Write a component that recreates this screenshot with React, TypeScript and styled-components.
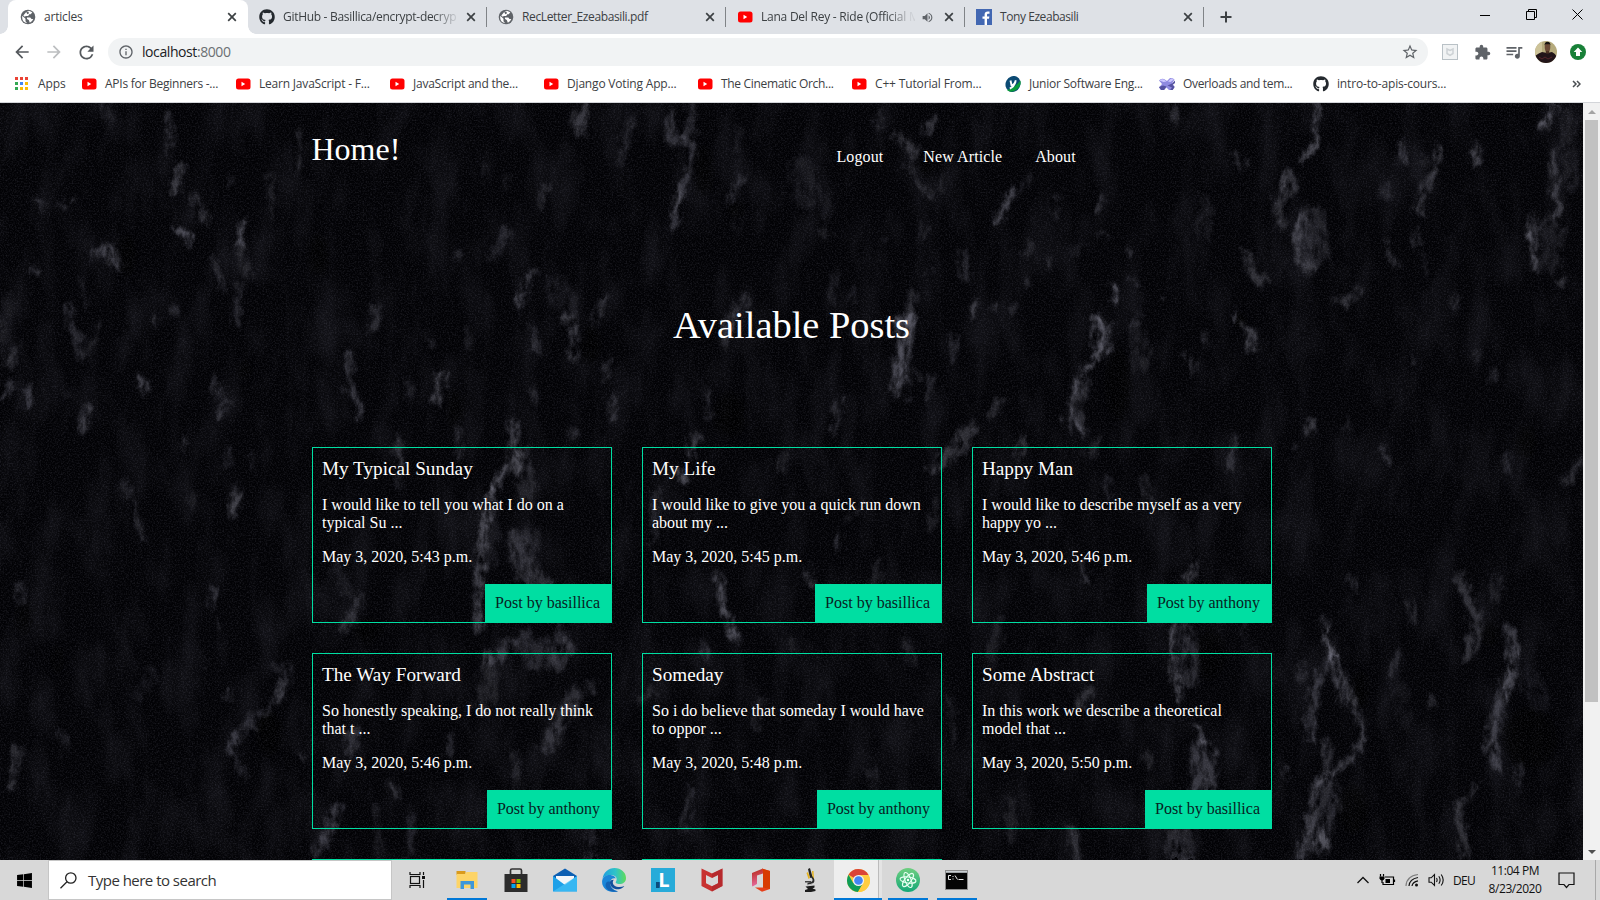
import React from "react";
import styled, { createGlobalStyle } from "styled-components";
import { FaGithub, FaWindows } from "react-icons/fa";
import {
  MdArrowBack,
  MdArrowForward,
  MdRefresh,
  MdInfoOutline,
  MdStarBorder,
  MdExtension,
  MdQueueMusic,
  MdVolumeUp,
} from "react-icons/md";

const UI_FONT = '"Open Sans", "Noto Sans", sans-serif';
const PAGE_FONT = '"Liberation Serif", "Times New Roman", serif';
const ACCENT = "#00dea2";

const GlobalStyle = createGlobalStyle`
  html, body { margin: 0; padding: 0; }
  body { overflow: hidden; background: #000; }
  * { box-sizing: border-box; }
`;

const Screen = styled.div`
  width: 1600px;
  height: 900px;
  display: flex;
  flex-direction: column;
  font-family: ${UI_FONT};
  overflow: hidden;
`;

/* ---------- browser chrome ---------- */

const TabStrip = styled.div`
  height: 34px;
  flex: none;
  display: flex;
  background: #dee1e6;
  padding-left: 8px;
`;

const TabBox = styled.div<{ $active?: boolean }>`
  position: relative;
  width: ${(p) => (p.$active ? 240 : 239)}px;
  height: 34px;
  padding: 0 8px 0 ${(p) => (p.$active ? 12 : 11)}px;
  display: flex;
  align-items: center;
  border-radius: 8px 8px 0 0;
  background: ${(p) => (p.$active ? "#fff" : "transparent")};

  &::before,
  &::after {
    content: "";
    position: absolute;
    display: ${(p) => (p.$active ? "block" : "none")};
    bottom: 0;
    width: 8px;
    height: 8px;
  }
  &::before {
    left: -8px;
    background: radial-gradient(circle at 0 0, transparent 7.5px, #fff 8px);
  }
  &::after {
    right: -8px;
    background: radial-gradient(circle at 100% 0, transparent 7.5px, #fff 8px);
  }
`;

const TabDivider = styled.span`
  position: absolute;
  right: 0;
  top: 7px;
  width: 1px;
  height: 20px;
  background: #808387;
`;

const IconSlot = styled.span<{ $size?: number }>`
  width: ${(p) => p.$size ?? 16}px;
  height: ${(p) => p.$size ?? 16}px;
  flex: none;
  display: flex;
  align-items: center;
  justify-content: center;
`;

const TabTitle = styled.span<{ $track?: number; $fade?: boolean }>`
  flex: 1;
  margin: 0 ${(p) => (p.$fade ? 2 : 8)}px 1px 8px;
  min-width: 0;
  white-space: nowrap;
  font-size: 12px;
  line-height: 18px;
  letter-spacing: ${(p) => p.$track ?? 0}px;
  color: #3c4043;
  ${(p) =>
    p.$fade
      ? "-webkit-mask-image: linear-gradient(90deg, #000 calc(100% - 28px), rgba(0, 0, 0, 0.1) calc(100% - 4px));"
      : ""}
`;

const AudioSlot = styled.span`
  width: 24px;
  flex: none;
  display: flex;
  padding-left: 4px;
`;

const NewTab = styled.div`
  width: 44px;
  display: flex;
  align-items: center;
  justify-content: center;
`;

const WindowButtons = styled.div`
  margin-left: auto;
  display: flex;
  height: 29px;
`;

const WindowButton = styled.div`
  width: 46px;
  display: flex;
  align-items: center;
  justify-content: center;
`;

const Toolbar = styled.div`
  height: 36px;
  flex: none;
  background: #fff;
  display: flex;
  align-items: center;
  padding-left: 6px;
`;

const NavButton = styled.span<{ $dim?: boolean }>`
  width: 32px;
  display: flex;
  justify-content: center;
  color: ${(p) => (p.$dim ? "#bcbec0" : "#55595d")};
`;

const AddressBar = styled.div`
  width: 1320px;
  height: 28px;
  margin-left: 6px;
  border-radius: 14px;
  background: #f1f3f4;
  display: flex;
  align-items: center;
  padding: 0 9px 0 10px;
  color: #5f6368;
`;

const Address = styled.span`
  flex: 1;
  margin: 0 8px;
  font-size: 14px;
  line-height: 20px;
  letter-spacing: -0.42px;
  color: #6b6f73;
  b {
    font-weight: 400;
    color: #202124;
  }
`;

const Extensions = styled.div`
  margin-left: 6px;
  display: flex;
`;

const ExtensionSlot = styled.span`
  width: 32px;
  height: 24px;
  display: flex;
  align-items: center;
  justify-content: center;
  color: #5f6368;
`;

const Bookmarks = styled.div`
  height: 33px;
  flex: none;
  background: #fff;
  border-bottom: 1px solid #d3d5d9;
  display: flex;
  align-items: center;
  padding: 0 19px 4px 14px;
`;

const Bookmark = styled.div<{ $width: number }>`
  width: ${(p) => p.$width}px;
  flex: none;
  display: flex;
  align-items: center;
`;

const BookmarkLabel = styled.span<{ $track: number }>`
  margin-left: 8px;
  font-size: 12px;
  line-height: 18px;
  white-space: nowrap;
  letter-spacing: ${(p) => p.$track}px;
  color: #3c4043;
`;

const MoreBookmarks = styled.span`
  margin-left: auto;
  display: flex;
`;

/* ---------- web page ---------- */

const Viewport = styled.div`
  height: 757px;
  flex: none;
  display: flex;
`;

const Page = styled.div`
  position: relative;
  width: 1583px;
  height: 757px;
  overflow: hidden;
  background: #040407;
  color: #fff;
  font-family: ${PAGE_FONT};
`;

const Backdrop = styled.svg`
  position: absolute;
  inset: 0;
  width: 1583px;
  height: 757px;
`;

const Content = styled.main`
  position: relative;
  width: 960px;
  margin: 0 auto;
`;

const Header = styled.header`
  height: 104px;
  display: flex;
  padding-top: 28px;
`;

const Brand = styled.div`
  width: 525px;
  font-size: 32px;
  line-height: 37px;
`;

const Menu = styled.nav`
  display: flex;
  padding-top: 17px;
  font-size: 16px;
  line-height: 18px;
`;

const MenuItem = styled.span<{ $gap: number }>`
  margin-right: ${(p) => p.$gap}px;
  letter-spacing: 0.1px;
`;

const Heading = styled.h1`
  margin: 96px 0 0;
  height: 144px;
  font-weight: 400;
  font-size: 38.4px;
  line-height: 44px;
  text-align: center;
`;

const Grid = styled.section`
  display: grid;
  grid-template-columns: repeat(3, 300px);
  gap: 30px;
`;

const Card = styled.article`
  height: 176px;
  border: 1px solid ${ACCENT};
  padding: 10px 0 0 9.5px;
  display: flex;
  flex-direction: column;
`;

const CardTitle = styled.h2`
  margin: 0;
  font-size: 19.2px;
  font-weight: 400;
  line-height: 22px;
`;

const CardText = styled.p`
  margin: 16px 10px 0 0;
  font-size: 16px;
  line-height: 18px;
`;

const Author = styled.span`
  align-self: flex-end;
  margin: 18px -1px -1px 0;
  height: 39px;
  padding: 0 11.5px 0 10px;
  background: ${ACCENT};
  color: #07221f;
  font-size: 16px;
  line-height: 38px;
`;

const ScrollTrack = styled.div`
  width: 17px;
  background: #f1f1f1;
  display: flex;
  flex-direction: column;
  align-items: center;
`;

const ScrollArrow = styled.span`
  height: 17px;
  display: flex;
  align-items: center;
`;

const ScrollThumb = styled.span`
  width: 13px;
  height: 582px;
  margin-bottom: auto;
  background: #c1c1c1;
`;

/* ---------- taskbar ---------- */

const Taskbar = styled.div`
  height: 40px;
  flex: none;
  background: #d8d8d8;
  display: flex;
  color: #111;
`;

const StartButton = styled.div`
  width: 48px;
  display: flex;
  align-items: center;
  justify-content: center;
  color: #000;
`;

const SearchBox = styled.div`
  width: 344px;
  height: 40px;
  border: 1px solid #c6c6c6;
  background: #fff;
  display: flex;
  align-items: center;
  padding-left: 11px;
`;

const SearchText = styled.span`
  margin: 0 0 1px 11px;
  font-size: 15px;
  letter-spacing: -0.52px;
  color: #333;
`;

const TaskItem = styled.div<{ $width?: number; $open?: boolean; $active?: boolean }>`
  position: relative;
  width: ${(p) => p.$width ?? 49}px;
  display: flex;
  align-items: center;
  justify-content: center;
  background: ${(p) =>
    p.$active
      ? "linear-gradient(90deg, #eee 44px, #bcbcbc 44px, #bcbcbc 45px, #e4e4e4 45px, #e4e4e4 48px, transparent 48px)"
      : "transparent"};
  &::after {
    content: "";
    position: absolute;
    display: ${(p) => (p.$open ? "block" : "none")};
    left: ${(p) => (p.$active ? 0 : 5)}px;
    width: ${(p) => (p.$active ? 48 : 40)}px;
    bottom: 0;
    height: 2px;
    background: #0078d7;
  }
`;

const Tray = styled.div`
  margin-left: auto;
  display: flex;
  align-items: center;
`;

const TraySlot = styled.span<{ $width: number }>`
  width: ${(p) => p.$width}px;
  display: flex;
  justify-content: center;
`;

const Language = styled.span`
  width: 26px;
  margin-left: 6px;
  font-size: 12px;
  letter-spacing: -0.7px;
`;

const Clock = styled.div`
  width: 72px;
  font-size: 12px;
  line-height: 18px;
  letter-spacing: -0.45px;
  text-align: center;
`;

const ShowDesktop = styled.span`
  width: 5px;
  height: 40px;
  margin-left: 14px;
  border-left: 1px solid #a8a8a8;
`;

/* ---------- icons ---------- */

const YouTubeIcon = () => (
  <svg width="16" height="16" viewBox="0 0 16 16">
    <rect x="1" y="2.500" width="14.500" height="11" rx="2.500" fill="#f00" />
    <path d="M6.500 5.800v4.400L10.200 8z" fill="#fff" />
  </svg>
);

const GlobeIcon = () => (
  <svg width="16" height="16" viewBox="0 0 16 16">
    <circle cx="8" cy="8" r="7.300" fill="#5f6368" />
    <path
      d="M2.200 6.800l3.300 3v2.400l1.700 2Q2.500 13.500 2.200 9zM6 3.200l3-1.400 3.300 1.500-1.500 1.900H9.300L8.200 7H5.800l-1 .8-1.500-1.300zM7 8.500h3.300l1.200 1.600h1.800Q12.200 13 9.800 13.700L8.800 11 7 10z"
      fill="#fff"
    />
    <path d="M6.200 3.300l2.200-.6.600 1.500-1.500 1z" fill="#5f6368" />
  </svg>
);

const GithubIcon = () => <FaGithub size={16} color="#24292e" />;

const FacebookIcon = () => (
  <svg width="16" height="16" viewBox="0 0 16 16">
    <rect width="16" height="16" fill="#4267b2" />
    <path
      d="M11 16V9.800h2l.35-2.400H11V5.900c0-.8.3-1.200 1.200-1.200h1.300V2.500c-.4-.05-1-.1-1.700-.1-2 0-3.200 1.200-3.200 3.200v1.800H6.500v2.400h2.100V16z"
      fill="#fff"
    />
  </svg>
);

const CloseIcon = () => (
  <svg width="16" height="16" viewBox="0 0 16 16">
    <path d="M4.200 4.200l7.600 7.600M11.800 4.200l-7.600 7.600" stroke="#3c4043" strokeWidth="1.700" />
  </svg>
);

const AppsIcon = () => (
  <svg width="16" height="16" viewBox="0 0 16 16">
    {["#ea4335", "#ea4335", "#ea4335", "#34a853", "#4285f4", "#fbbc05", "#34a853", "#fbbc05", "#fbbc05"].map(
      (c, i) => (
        <rect key={i} x={1 + (i % 3) * 5} y={1 + Math.floor(i / 3) * 5} width="3" height="3" fill={c} />
      )
    )}
  </svg>
);

const YIcon = () => (
  <svg width="16" height="16" viewBox="0 0 16 16">
    <ellipse cx="8" cy="8" rx="7.300" ry="8.200" transform="rotate(28 8 8)" fill="#0b4a73" />
    <path d="M15.300 4.500Q17 9 11.500 13.800 6 17.500 1.800 14 10 12 15.300 4.500z" fill="#0a9b3c" />
    <path d="M5.500 4.500l1 4.800q2.800 0 4.300-5M10.600 5.500Q9 11 4.800 12.500" stroke="#fff" strokeWidth="1.900" fill="none" />
  </svg>
);

const OverloadIcon = () => (
  <svg width="16" height="16" viewBox="0 0 16 16">
    <path d="M0 4.500Q2 2 5 3l3 2 3-3q3-.5 4.500 1.500L13 7.500l2.500 3-2 3.500H10L7.500 11.500 5 14H2L0 11.500l3-3.500z" fill="#8f8ae0" />
    <path d="M8.500 9.500l4.500-2 3-3v2.500l-2.500 2 2.200 2-2 3H11l2-2.500zM0 11l4-1.500 3.500 1L5 14H2z" fill="#5552a0" />
    <path d="M.5 4.500Q2.500 2.500 5 3.500l2.500 2L4.500 6zM9 5.500L12 2.500l3 1-3.500 2.500z" fill="#cdc8ff" />
  </svg>
);

const Avatar = () => (
  <svg width="22" height="22" viewBox="0 0 22 22">
    <clipPath id="avatar">
      <circle cx="11" cy="11" r="11" />
    </clipPath>
    <g clipPath="url(#avatar)">
      <rect width="22" height="22" fill="#b5aa7c" />
      <rect width="7" height="22" fill="#cdc399" />
      <path d="M0 22v-7q4-3 7-4l5 1 5-1q4 2 5 5v6z" fill="#221519" />
      <path d="M4 16l3 2 3-2 3 2 4-2" stroke="#54262b" fill="none" />
      <path d="M10.500 8.500h4l-.5 4h-3z" fill="#4a3022" />
      <ellipse cx="12.500" cy="6" rx="2.800" ry="4.300" fill="#6a4935" />
      <path d="M9.500 4.500q0-3.800 3-3.800t3 3.800l-1-1.200h-4z" fill="#16110f" />
    </g>
  </svg>
);

const ShieldIcon = () => (
  <svg width="16" height="16" viewBox="0 0 16 16">
    <rect x="0.500" y="0.500" width="15" height="15" fill="#f1f3f4" stroke="#b9c1c6" />
    <path d="M5 5l3 1.500L11 5v4.500l-3 1.800-3-1.800z" fill="none" stroke="#cdd2d5" strokeWidth="1.500" />
  </svg>
);

const UpdateIcon = () => (
  <svg width="16" height="16" viewBox="0 0 16 16">
    <circle cx="8" cy="8" r="8" fill="#188038" />
    <path d="M8 3.500L12.300 8H10v4H6V8H3.700z" fill="#fff" />
  </svg>
);

const SearchIcon = () => (
  <svg width="17" height="17" viewBox="0 0 17 17" fill="none" stroke="#222" strokeWidth="1.300">
    <circle cx="10.800" cy="6" r="5.200" />
    <path d="M7 9.800L0.500 16.300" />
  </svg>
);

const TaskViewIcon = () => (
  <svg width="17" height="16" viewBox="0 0 17 16" fill="none" stroke="#111" strokeWidth="1.200">
    <rect x="1.500" y="4.500" width="9" height="7" />
    <path d="M1 0v2.500h10V0M1 16v-2.500h10V16M14.500 0v3M14.500 8v8" />
    <rect x="13" y="4" width="3" height="3" fill="#111" stroke="none" />
  </svg>
);

const ExplorerIcon = () => (
  <svg width="22" height="20" viewBox="0 0 22 20">
    <path d="M0.500 1h9v4h-9z" fill="#d99a1c" />
    <path d="M0.500 4L9 4l1.500-2h11V18h-21z" fill="#fdd467" />
    <path d="M4.500 19v-8h13.500v8h-3.500v-4.500h-6.500V19z" fill="#3e97d9" />
  </svg>
);

const StoreIcon = () => (
  <svg width="24" height="24" viewBox="0 0 24 24">
    <path d="M6.500 7V2.500Q6.500 1 8 1h8Q17.500 1 17.500 2.500V7" fill="none" stroke="#333" strokeWidth="1.700" />
    <path d="M0.500 6h23v18h-23z" fill="#2c2c2c" />
    <path d="M7.500 11h4v4h-4z" fill="#f25022" />
    <path d="M12.500 11h4v4h-4z" fill="#7fba00" />
    <path d="M7.500 16h4v4h-4z" fill="#00a4ef" />
    <path d="M12.500 16h4v4h-4z" fill="#ffb900" />
  </svg>
);

const MailIcon = () => (
  <svg width="24" height="24" viewBox="0 0 24 24">
    <path d="M0 8L12 0.500 24 8v3H0z" fill="#0d5fb3" />
    <path d="M3 8h18v8H3z" fill="#f3f6f9" />
    <path d="M0 8l12 9 12-9v15.500H0z" fill="#1ea0e8" />
    <path d="M0 23.500L24 8v15.500z" fill="#42c0f7" opacity="0.700" />
  </svg>
);

const EdgeIcon = () => (
  <svg width="24" height="24" viewBox="0 0 24 24">
    <defs>
      <linearGradient id="edgeTop" x1="0" y1="0.500" x2="1" y2="0.500">
        <stop offset="0" stopColor="#1f9fe0" />
        <stop offset="0.550" stopColor="#2fc3c8" />
        <stop offset="1" stopColor="#5fdc5a" />
      </linearGradient>
    </defs>
    <path d="M0.500 11C1.500 4 6.500 0 12.500 0 19 0 24 4.500 24 10c0 4-3 6-6.500 6-3 0-4.500-1.200-3.500-2.500 1.500-2 .5-5.500-3-6.200C6.500 6.500 2 8 0.500 11z" fill="url(#edgeTop)" />
    <path d="M0.200 12.500C1 8.500 5 6.500 9.500 7.200c2.500.4 4 1.800 4.300 3.300C11 9.500 8 11.500 8 15c0 4 3.500 7.500 8 8.200C8 26 -1 21 .2 12.500z" fill="#1b86d8" />
    <path d="M8 14c-.5 5 5 8.500 10 7 1.800-.5 3.500-1.800 4.300-3-3 1.500-7.500 1.500-10-.5-1.800-1.500-2-4-.6-5.800C9.800 11.600 8.200 12.500 8 14z" fill="#124f9c" />
    <path d="M8 14c-.5 5 3.500 9.300 8 9.200-2 1-9 1-11.500-3S5 12 8 14z" fill="#1563b3" />
  </svg>
);

const LTile = styled.span`
  width: 24px;
  height: 24px;
  background: linear-gradient(102deg, transparent 46%, #27abd9 47%) 5px 5px / 11px 15px no-repeat,
    linear-gradient(#0a4d7c, #0a4d7c) 5px 14px / 6px 6px no-repeat, #27abd9;
  color: #fff;
  display: flex;
  align-items: center;
  justify-content: center;
  padding-left: 3px;
  font-size: 20px;
  font-weight: 700;
  line-height: 24px;
`;

const McAfeeIcon = () => (
  <svg width="22" height="24" viewBox="0 0 22 24">
    <path d="M0.500 0.500L11 5.500l10.500-5v17.500L11 23.500 0.500 18zM5 7v8.300l6 3 6-3V7l-6 3z" fill="#c8312f" fillRule="evenodd" />
    <path d="M11 5.500l10.500-5v17.500L11 23.500v-5.200l6-3V7l-6 3z" fill="#a8242b" opacity="0.550" />
  </svg>
);

const OfficeIcon = () => (
  <svg width="20" height="24" viewBox="0 0 20 24">
    <defs>
      <linearGradient id="office" x1="0" y1="0" x2="0.200" y2="1">
        <stop offset="0" stopColor="#b52512" />
        <stop offset="1" stopColor="#e66a9d" />
      </linearGradient>
    </defs>
    <path d="M1 5l11-4.500v5L6 7.500V16l-4.500 2.500Q1 18 1 17z" fill="url(#office)" />
    <path d="M11 0.500L19 3v18l-8 2.700-7-4.200h8V4.500z" fill="#e5401a" />
    <path d="M12 19.500V1l7 2v18z" fill="#d83b01" />
  </svg>
);

const MicroscopeIcon = () => (
  <svg width="12" height="24" viewBox="0 0 12 24">
    <path d="M4 1l2-1 2.500 9-2.500 1z" fill="#222" />
    <path d="M2.500 5l1.500-1 2 6-1.500 1zM8 3l1.500 0 .5 8-1.500 0z" fill="#e6b422" />
    <path d="M8 8q4 4 1.500 7l-6 2v-2l4.500-1.500q1.500-2-1-4z" fill="#2a2a2a" />
    <path d="M1 13h6v1.500H1z" fill="#444" />
    <path d="M1.500 18.500l9-1v2l-2 1 3 1v1.500L7 24H1v-2l3-1z" fill="#1c1c1c" />
    <path d="M3 17.300l5-1" stroke="#bbb" />
  </svg>
);

const ChromeIcon = () => (
  <svg width="23" height="23" viewBox="0 0 24 24">
    <circle cx="12" cy="12" r="12" fill="#ffcd40" />
    <path d="M12 12L1.600 6A12 12 0 0 1 22.400 6.200H12z" fill="#db4437" />
    <path d="M1.600 6A12 12 0 0 0 11.500 24l5.500-9.500L12 12 6.500 14.500z" fill="#0f9d58" />
    <path d="M22.400 6.200A12 12 0 0 1 11.500 24L17 14.500 15 6.200z" fill="#ffcd40" />
    <circle cx="12" cy="12" r="5.800" fill="#f1f1f1" />
    <circle cx="12" cy="12" r="4.500" fill="#4285f4" />
  </svg>
);

const AtomIcon = () => (
  <svg width="24" height="24" viewBox="0 0 24 24">
    <defs>
      <linearGradient id="atom" x1="0" y1="0" x2="0" y2="1">
        <stop offset="0" stopColor="#6fcf80" />
        <stop offset="1" stopColor="#14a877" />
      </linearGradient>
    </defs>
    <circle cx="12" cy="12" r="12" fill="url(#atom)" />
    <g fill="none" stroke="#e8fff2" strokeWidth="1.100">
      <ellipse cx="12" cy="12" rx="8" ry="3" transform="rotate(8 12 12)" />
      <ellipse cx="12" cy="12" rx="8" ry="3" transform="rotate(68 12 12)" />
      <ellipse cx="12" cy="12" rx="8" ry="3" transform="rotate(128 12 12)" />
    </g>
    <circle cx="12" cy="12" r="1.200" fill="#fff" />
  </svg>
);

const TerminalIcon = () => (
  <svg width="23" height="20" viewBox="0 0 23 20">
    <rect x="0.500" y="0.500" width="22" height="19" fill="#050505" stroke="#8c8c8c" />
    <rect x="1" y="1" width="21" height="1.800" fill="#c9ced2" />
    <path d="M6 5.500H3.500v4H6M8 6v1M8 8.500v1M10 5.500l2.500 4M13.500 9.500h5" stroke="#e8e8e8" fill="none" />
  </svg>
);

const BatteryIcon = () => (
  <svg width="17" height="13" viewBox="0 0 17 13" fill="none" stroke="#000" strokeWidth="1.200">
    <path d="M6 3h8.500v7.500H4V8M15.500 5.500v2.500" />
    <path d="M6.500 5H11v4H6.500z" fill="#000" stroke="none" />
    <path d="M1.500 0v2.500M4.500 0v2.500M3 6v3" />
    <path d="M0.500 2.500h5v2Q5 6.500 3 6.500T.5 4.500z" fill="#000" stroke="none" />
  </svg>
);

const WifiIcon = () => (
  <svg width="14" height="14" viewBox="0 0 14 14" fill="none" stroke="#111" strokeWidth="1.200">
    <path d="M1 13Q1.500 3 13 1.500" opacity="0.450" />
    <path d="M4 13Q4.500 6 13 4.500M7 13q.5-4 6-5.200" />
    <circle cx="11.500" cy="12" r="1.500" fill="#111" stroke="none" />
  </svg>
);

const SpeakerIcon = () => (
  <svg width="17" height="14" viewBox="0 0 17 14" fill="none" stroke="#111" strokeWidth="1.100">
    <path d="M1 4.800h2.200L6.500 1.500v11L3.200 9.200H1z" />
    <path d="M8.500 5q1.200 2 0 4M10.800 3.200q2.600 3.800 0 7.600M13.200 1.500q4 5.500 0 11" />
  </svg>
);

const NotificationIcon = () => (
  <svg width="17" height="17" viewBox="0 0 17 17" fill="none" stroke="#111" strokeWidth="1.200">
    <path d="M1 1h15v11.500h-5L8.500 15.500 6 12.500H1z" />
  </svg>
);

/* ---------- rock texture ---------- */

/* Each vein is [points, width, brightness]. */
type Vein = [string, number, number];

const veins: Vein[] = [
  ["168,113 170,153", 5, 0.3], ["182,168 174,190", 7, 0.35], ["195,200 205,220", 12, 0.22],
  ["174,226 192,241", 8, 0.4], ["244,223 240,243", 8, 0.42], ["270,177 273,213", 7, 0.15],
  ["299,130 298,170", 4, 0.25], ["36,200 45,206", 6, 0.22], ["62,208 72,200", 6, 0.22],
  ["94,254 109,247 117,266", 9, 0.32], ["34,270 35,273", 6, 0.3], ["213,260 221,287", 8, 0.2],
  ["240,245 246,275", 10, 0.14], ["238,283 236,320", 8, 0.2], ["80,280 87,303", 4, 0.2],
  ["69,307 71,327 83,357", 9, 0.2], ["98,327 90,350", 8, 0.14], ["154,315 156,322", 6, 0.25],
  ["174,308 175,316", 6, 0.2], ["14,348 10,364", 6, 0.25], ["12,383 2,397", 7, 0.28],
  ["28,390 26,405", 8, 0.28], ["138,377 147,391", 6, 0.4], ["87,410 83,430", 8, 0.35],
  ["66,388 65,396", 4, 0.2], ["216,380 215,393", 7, 0.2], ["226,402 220,413", 8, 0.34],
  ["182,441 185,446", 4, 0.5], ["378,307 375,330", 9, 0.22], ["348,350 352,390 360,415", 7, 0.28],
  ["441,375 436,400", 8, 0.34], ["484,165 486,180", 5, 0.16], ["504,175 506,190", 4, 0.12],
  ["547,183 541,206", 4, 0.25], ["506,230 494,257", 8, 0.18], ["459,253 458,260", 6, 0.2],
  ["534,270 522,290 519,308", 6, 0.4], ["555,285 570,305", 22, 0.1], ["562,320 568,316", 8, 0.35],
  ["573,330 573,357", 9, 0.32], ["533,330 536,348", 7, 0.28], ["605,298 593,323", 8, 0.22],
  ["609,363 604,380", 6, 0.22], ["534,387 535,402", 4, 0.3], ["614,393 612,420", 4, 0.38],
  ["585,107 579,133", 7, 0.34], ["574,112 571,125", 5, 0.25], ["512,423 520,470", 11, 0.3],
  ["458,427 459,455", 7, 0.2], ["401,437 397,462", 8, 0.24], ["466,330 470,345", 5, 0.15],
  ["409,380 409,397", 5, 0.2], ["430,335 432,345", 6, 0.16], ["105,107 110,120", 12, 0.1],
  ["230,177 229,182", 7, 0.18], ["5,300 8,360", 20, 0.06], ["573,430 573,437", 5, 0.25],
  ["229,450 228,465", 5, 0.18], ["251,453 253,470", 4, 0.18],
  ["122,480 135,508 142,540", 6, 0.2], ["237,490 233,513", 8, 0.36], ["192,492 191,507", 6, 0.15],
  ["18,585 23,603", 7, 0.22], ["213,588 212,603", 6, 0.28], ["217,620 220,627", 6, 0.15],
  ["204,660 203,664", 5, 0.28], ["274,665 289,668 284,690 270,708 245,722 233,742 242,775", 8, 0.18],
  ["285,680 274,706", 5, 0.25], ["231,692 227,698", 5, 0.34], ["253,725 253,727", 9, 0.22],
  ["236,735 231,748", 10, 0.18], ["17,750 11,787", 8, 0.25], ["63,733 67,753", 5, 0.2],
  ["152,670 140,697", 12, 0.09], ["302,750 303,762", 5, 0.25], ["353,733 350,750", 12, 0.2],
  ["450,738 449,752", 8, 0.2], ["508,468 493,490", 7, 0.42],
  ["493,490 485,520 480,560 478,628", 9, 0.32], ["515,450 528,490", 22, 0.14],
  ["518,540 526,570 545,592", 22, 0.22], ["530,527 537,545", 6, 0.2], ["490,510 488,560", 20, 0.1],
  ["360,597 344,630", 8, 0.22], ["335,567 345,590", 14, 0.1], ["398,460 402,490", 4, 0.2],
  ["492,658 510,645", 14, 0.28], ["525,640 537,660 560,640", 22, 0.18], ["556,665 568,645", 16, 0.2],
  ["488,667 484,705", 20, 0.15], ["575,695 562,720 548,745", 17, 0.22], ["514,755 518,785", 5, 0.24],
  ["390,780 396,797", 6, 0.25], ["336,808 330,830 318,850", 12, 0.28], ["411,815 411,853", 8, 0.18],
  ["376,807 380,850", 8, 0.12], ["592,830 592,858", 9, 0.18], ["590,685 591,690", 7, 0.25],
  ["672,113 669,140 690,143 693,160 678,197 671,230", 7, 0.28], ["678,190 676,208", 8, 0.25],
  ["692,107 688,140", 9, 0.2], ["632,117 621,163", 7, 0.18], ["740,125 737,150", 6, 0.12],
  ["741,177 729,203", 7, 0.2], ["735,215 737,235", 5, 0.12], ["803,167 807,197", 26, 0.1],
  ["829,195 826,220", 5, 0.12], ["879,115 878,130", 6, 0.2], ["936,117 926,130", 6, 0.32],
  ["900,137 913,153", 11, 0.25], ["909,163 918,182 932,197", 5, 0.24], ["945,175 938,188", 5, 0.15],
  ["1012,193 999,218", 7, 0.4], ["1030,175 1022,190", 5, 0.16], ["1060,193 1056,215", 5, 0.2],
  ["1103,197 1098,211", 3, 0.5], ["960,253 968,280", 7, 0.2], ["1030,243 1025,257", 5, 0.25],
  ["1048,260 1050,267", 5, 0.25], ["1027,282 1029,288", 4, 0.3], ["977,303 973,317", 4, 0.5],
  ["995,308 997,308", 5, 0.45], ["1013,308 1014,309", 4, 0.45], ["930,272 932,272", 4, 0.3],
  ["884,238 885,238", 4, 0.3], ["925,230 918,238", 6, 0.2], ["1112,285 1117,303", 5, 0.34],
  ["1104,234 1105,236", 6, 0.22], ["1078,245 1076,255", 7, 0.12], ["822,230 828,238", 7, 0.15],
  ["913,297 909,318", 9, 0.24], ["906,320 902,347 898,387", 14, 0.4], ["836,273 834,300", 5, 0.16],
  ["853,287 853,300", 5, 0.18], ["748,297 731,317", 7, 0.22], ["731,317 724,343", 8, 0.25],
  ["953,337 954,357", 4, 0.28], ["917,374 918,376", 4, 0.35], ["908,399 908,402", 4, 0.3],
  ["930,378 928,400", 7, 0.2], ["841,397 834,430", 7, 0.2],
  ["1096,317 1105,327 1104,350 1082,370 1073,400 1070,417 1082,433", 7, 0.42],
  ["1096,320 1098,346", 10, 0.3], ["1088,385 1078,405 1083,430", 7, 0.22], ["1003,400 990,417", 6, 0.26],
  ["970,430 958,447 935,467", 14, 0.24], ["1023,437 1018,455", 7, 0.26], ["707,390 711,417", 6, 0.18],
  ["695,437 691,455", 6, 0.35], ["1098,438 1090,455", 12, 0.14],
  ["1319,105 1315,123 1319,140 1303,160", 5, 0.5], ["1290,170 1283,188", 4, 0.55],
  ["1296,180 1277,203 1280,225", 9, 0.24], ["1302,207 1297,240 1300,260 1313,272", 6, 0.34],
  ["1312,218 1315,252", 28, 0.16], ["1437,147 1437,170 1420,193 1420,213", 6, 0.34],
  ["1402,143 1403,160", 7, 0.3], ["1424,158 1426,164", 4, 0.25], ["1476,150 1476,163", 7, 0.38],
  ["1553,105 1543,127", 6, 0.5], ["1552,150 1555,183 1560,207 1552,220", 4, 0.45],
  ["1530,218 1533,240 1535,268", 7, 0.38], ["1542,222 1534,236", 6, 0.3], ["1560,281 1566,283", 6, 0.35],
  ["1568,120 1570,180", 20, 0.1], ["1555,230 1549,262", 22, 0.12], ["1386,185 1386,197", 7, 0.18],
  ["1387,242 1394,265", 5, 0.25], ["1415,230 1417,245", 6, 0.22], ["1423,253 1426,277", 4, 0.16],
  ["1170,107 1174,120", 6, 0.25], ["1235,152 1243,165", 6, 0.25], ["1205,200 1206,235", 12, 0.12],
  ["1246,252 1249,270 1263,282", 9, 0.26], ["1113,287 1115,300", 6, 0.3], ["1139,315 1134,325", 5, 0.3],
  ["1130,277 1136,284", 6, 0.2], ["1127,248 1130,252", 7, 0.22], ["1163,297 1164,298", 4, 0.35],
  ["1236,312 1236,318", 5, 0.4], ["1246,328 1253,332 1249,348", 7, 0.35], ["1185,353 1194,372", 5, 0.26],
  ["1204,335 1207,342", 6, 0.24], ["1338,300 1348,303 1357,290", 8, 0.26], ["1455,300 1456,308", 7, 0.2],
  ["1412,360 1412,364", 4, 0.38], ["1476,352 1477,360", 4, 0.26], ["1310,422 1310,432", 6, 0.36],
  ["1386,447 1388,462", 5, 0.32], ["1347,417 1349,430", 4, 0.22], ["1493,370 1494,380", 6, 0.2],
  ["1238,437 1227,463 1232,473", 4, 0.32], ["1295,449 1296,450", 3, 0.5], ["1580,460 1567,483", 7, 0.25],
  ["1137,335 1140,365", 18, 0.12], ["1508,455 1508,472", 8, 0.18],
  ["1194,563 1184,583", 8, 0.34], ["1173,623 1171,650 1175,673 1180,700", 5, 0.5],
  ["1187,630 1190,680", 18, 0.2], ["1199,727 1202,742", 5, 0.55], ["1203,752 1203,785", 26, 0.28],
  ["1325,620 1330,653 1346,683 1365,733 1353,757 1332,772 1315,787 1309,837 1298,858", 7, 0.32],
  ["1325,622 1332,660", 5, 0.35], ["1332,657 1315,687 1311,737", 9, 0.28], ["1337,680 1340,700", 8, 0.3],
  ["1325,745 1330,770", 8, 0.24], ["1325,785 1328,805 1318,845", 22, 0.2], ["1318,835 1326,845", 12, 0.3],
  ["1461,577 1473,610 1480,623 1468,655", 12, 0.24], ["1495,580 1497,600", 12, 0.12],
  ["1510,630 1515,660 1504,693 1496,717 1490,747 1498,768", 11, 0.3],
  ["1513,650 1503,700", 5, 0.2], ["1473,787 1458,808 1465,855", 8, 0.26], ["1518,767 1518,788", 7, 0.2],
  ["1411,603 1412,622", 7, 0.25], ["1353,580 1353,585", 6, 0.36], ["1399,653 1391,675", 6, 0.2],
  ["1432,698 1433,708", 5, 0.26], ["1301,665 1301,680", 5, 0.25], ["1286,768 1287,775", 5, 0.3],
  ["1091,690 1077,705", 7, 0.25], ["1082,563 1087,582", 5, 0.3], ["1071,828 1078,858", 7, 0.25],
  ["1178,835 1182,858", 24, 0.2], ["1145,750 1150,765", 10, 0.15], ["1244,626 1243,636", 5, 0.18],
  ["1530,680 1540,700", 24, 0.08], ["1400,690 1405,720", 20, 0.06],
  ["679,472 684,478", 9, 0.4], ["658,490 651,545", 7, 0.2], ["720,575 722,605 731,625 734,637", 8, 0.42],
  ["809,565 812,585", 7, 0.26], ["704,645 707,660", 5, 0.28], ["838,535 835,548", 6, 0.3],
  ["784,455 783,470", 8, 0.15], ["860,500 850,520", 9, 0.12], ["880,560 870,600", 8, 0.14],
  ["935,500 930,530", 8, 0.14], ["1000,620 990,660", 10, 0.12], ["760,700 755,730", 9, 0.14],
  ["690,790 684,830", 8, 0.18], ["790,640 797,650", 8, 0.14], ["870,770 880,800", 10, 0.12],
  ["640,700 652,690", 7, 0.15], ["950,700 955,740", 7, 0.16], ["1010,800 1012,840", 9, 0.14],
  ["1105,480 1110,500", 6, 0.18], ["1145,480 1150,500", 9, 0.14], ["905,640 912,660", 8, 0.14],
];

/* Hollows are [cx, cy, rx, ry]. */
const hollows: number[][] = [
  [127, 255, 9, 19], [318, 255, 9, 20], [591, 345, 9, 18], [455, 408, 7, 18], [245, 370, 6, 8],
  [24, 617, 7, 16], [57, 660, 5, 14], [269, 733, 12, 22], [368, 630, 14, 12], [1118, 385, 12, 36],
  [925, 166, 8, 8], [736, 210, 7, 7], [703, 170, 9, 24], [1360, 690, 8, 18], [1490, 634, 9, 12],
  [1353, 810, 14, 24], [1210, 655, 14, 25], [1530, 738, 26, 30], [1240, 320, 6, 8],
  [1526, 442, 10, 16], [730, 415, 16, 22],
];

const RockTexture = () => (
  <Backdrop viewBox="0 103 1583 757" aria-hidden="true">
    <defs>
      <filter id="mottle" x="0" y="0" width="100%" height="100%" colorInterpolationFilters="sRGB">
        <feTurbulence type="fractalNoise" baseFrequency="0.035 0.014" numOctaves="5" seed="11" />
        <feColorMatrix values="0 0 0 0 0.48  0 0 0 0 0.48  0 0 0 0 0.55  1.200 0 0 0 -0.520" />
      </filter>
      <filter id="rough" filterUnits="userSpaceOnUse" x="0" y="103" width="1583" height="757" colorInterpolationFilters="sRGB">
        <feTurbulence type="fractalNoise" baseFrequency="0.110 0.070" numOctaves="4" seed="4" result="warp" />
        <feGaussianBlur in="SourceGraphic" stdDeviation="2.400" result="soft" />
        <feDisplacementMap in="soft" in2="warp" scale="15" xChannelSelector="R" yChannelSelector="G" result="bent" />
        <feTurbulence type="fractalNoise" baseFrequency="0.140 0.070" numOctaves="4" seed="8" />
        <feColorMatrix values="0 0 0 0 1  0 0 0 0 1  0 0 0 0 1  2.400 0 0 0 -0.450" result="speckle" />
        <feComposite in="bent" in2="speckle" operator="in" result="worn" />
        <feGaussianBlur in="worn" stdDeviation="0.500" />
      </filter>
      <filter id="shade">
        <feGaussianBlur stdDeviation="3.500" />
      </filter>
      <filter id="grain" x="0" y="0" width="100%" height="100%" colorInterpolationFilters="sRGB">
        <feTurbulence type="fractalNoise" baseFrequency="0.650" numOctaves="2" seed="21" />
        <feColorMatrix values="0 0 0 0 0.600  0 0 0 0 0.600  0 0 0 0 0.680  0.900 0 0 0 -0.380" />
      </filter>
    </defs>
    <rect x="0" y="103" width="1583" height="757" fill="#020205" />
    <rect x="0" y="103" width="1583" height="757" filter="url(#mottle)" opacity="0.230" />
    <g filter="url(#shade)" fill="#000" opacity="0.700">
      {hollows.map(([cx, cy, rx, ry], i) => (
        <ellipse key={i} cx={cx} cy={cy} rx={rx} ry={ry} />
      ))}
    </g>
    <g filter="url(#rough)" fill="none" stroke="#a0a0b0" strokeLinecap="round" strokeLinejoin="round">
      {veins.map(([points, width, light], i) => (
        <polyline key={i} points={points} strokeWidth={width} strokeOpacity={Math.min(1, light * 1.15)} />
      ))}
    </g>
    <rect x="0" y="103" width="1583" height="757" filter="url(#grain)" opacity="0.420" />
  </Backdrop>
);

/* ---------- data ---------- */

const tabs = [
  { title: "articles", icon: <GlobeIcon />, active: true, track: -0.2 },
  { title: "GitHub - Basillica/encrypt-decryp", icon: <GithubIcon />, fade: true, divider: true, track: -0.3 },
  { title: "RecLetter_Ezeabasili.pdf", icon: <GlobeIcon />, divider: true, track: -0.38 },
  { title: "Lana Del Rey - Ride (Official M", icon: <YouTubeIcon />, fade: true, divider: true, audio: true, track: -0.24 },
  { title: "Tony Ezeabasili", icon: <FacebookIcon />, divider: true, track: -0.43 },
];

const bookmarks = [
  { label: "APIs for Beginners -...", icon: <YouTubeIcon />, track: -0.25 },
  { label: "Learn JavaScript - F...", icon: <YouTubeIcon />, track: -0.2 },
  { label: "JavaScript and the...", icon: <YouTubeIcon />, track: -0.24 },
  { label: "Django Voting App...", icon: <YouTubeIcon />, track: -0.18 },
  { label: "The Cinematic Orch...", icon: <YouTubeIcon />, track: -0.32 },
  { label: "C++ Tutorial From...", icon: <YouTubeIcon />, track: -0.15 },
  { label: "Junior Software Eng...", icon: <YIcon />, track: -0.24 },
  { label: "Overloads and tem...", icon: <OverloadIcon />, track: -0.34 },
  { label: "intro-to-apis-cours...", icon: <GithubIcon />, track: -0.17 },
];

const posts = [
  { title: "My Typical Sunday", text: "I would like to tell you what I do on a typical Su ...", date: "May 3, 2020, 5:43 p.m.", author: "basillica" },
  { title: "My Life", text: "I would like to give you a quick run down about my ...", date: "May 3, 2020, 5:45 p.m.", author: "basillica" },
  { title: "Happy Man", text: "I would like to describe myself as a very happy yo ...", date: "May 3, 2020, 5:46 p.m.", author: "anthony" },
  { title: "The Way Forward", text: "So honestly speaking, I do not really think that t ...", date: "May 3, 2020, 5:46 p.m.", author: "anthony" },
  { title: "Someday", text: "So i do believe that someday I would have to oppor ...", date: "May 3, 2020, 5:48 p.m.", author: "anthony" },
  { title: "Some Abstract", text: "In this work we describe a theoretical model that ...", date: "May 3, 2020, 5:50 p.m.", author: "basillica" },
];

export default function App() {
  return (
    <Screen>
      <GlobalStyle />
      <TabStrip>
        {tabs.map((t) => (
          <TabBox key={t.title} $active={t.active}>
            <IconSlot>{t.icon}</IconSlot>
            <TabTitle $track={t.track} $fade={t.fade}>{t.title}</TabTitle>
            {t.audio && (
              <AudioSlot>
                <MdVolumeUp size={13} color="#5f6368" />
              </AudioSlot>
            )}
            <IconSlot>
              <CloseIcon />
            </IconSlot>
            {t.divider && <TabDivider />}
          </TabBox>
        ))}
        <NewTab>
          <svg width="14" height="14" viewBox="0 0 14 14">
            <path d="M7 1.500v11M1.500 7h11" stroke="#3c4043" strokeWidth="2" />
          </svg>
        </NewTab>
        <WindowButtons>
          <WindowButton>
            <svg width="10" height="10"><path d="M0 5.500h10" stroke="#000" /></svg>
          </WindowButton>
          <WindowButton>
            <svg width="11" height="11" fill="none" stroke="#000">
              <path d="M0.500 2.500h8v8h-8zM2.500 2.500v-2h8v8h-2" />
            </svg>
          </WindowButton>
          <WindowButton>
            <svg width="11" height="11"><path d="M0.500 0.500l10 10M10.500 0.500l-10 10" stroke="#000" /></svg>
          </WindowButton>
        </WindowButtons>
      </TabStrip>
      <Toolbar>
        <NavButton><MdArrowBack size={20} /></NavButton>
        <NavButton $dim><MdArrowForward size={20} /></NavButton>
        <NavButton><MdRefresh size={21} /></NavButton>
        <AddressBar>
          <MdInfoOutline size={16} />
          <Address><b>localhost</b>:8000</Address>
          <MdStarBorder size={18} />
        </AddressBar>
        <Extensions>
          <ExtensionSlot><ShieldIcon /></ExtensionSlot>
          <ExtensionSlot><MdExtension size={17} /></ExtensionSlot>
          <ExtensionSlot><MdQueueMusic size={20} /></ExtensionSlot>
          <ExtensionSlot><Avatar /></ExtensionSlot>
          <ExtensionSlot><UpdateIcon /></ExtensionSlot>
        </Extensions>
      </Toolbar>
      <Bookmarks>
        <Bookmark $width={67}>
          <AppsIcon />
          <BookmarkLabel $track={-0.1}>Apps</BookmarkLabel>
        </Bookmark>
        {bookmarks.map((b) => (
          <Bookmark key={b.label} $width={154}>
            <IconSlot>{b.icon}</IconSlot>
            <BookmarkLabel $track={b.track}>{b.label}</BookmarkLabel>
          </Bookmark>
        ))}
        <MoreBookmarks>
          <svg width="9" height="8" viewBox="0 0 9 8">
            <path d="M1 1l3 3-3 3M5 1l3 3-3 3" fill="none" stroke="#4a4e52" strokeWidth="1.500" />
          </svg>
        </MoreBookmarks>
      </Bookmarks>
      <Viewport>
        <Page>
          <RockTexture />
          <Content>
            <Header>
              <Brand>Home!</Brand>
              <Menu>
                <MenuItem $gap={40}>Logout</MenuItem>
                <MenuItem $gap={33}>New Article</MenuItem>
                <MenuItem $gap={0}>About</MenuItem>
              </Menu>
            </Header>
            <Heading>Available Posts</Heading>
            <Grid>
              {posts.map((p) => (
                <Card key={p.title}>
                  <CardTitle>{p.title}</CardTitle>
                  <CardText>{p.text}</CardText>
                  <CardText>{p.date}</CardText>
                  <Author>Post by {p.author}</Author>
                </Card>
              ))}
              <Card />
              <Card />
            </Grid>
          </Content>
        </Page>
        <ScrollTrack>
          <ScrollArrow>
            <svg width="8" height="4"><path d="M0 4l4-4 4 4z" fill="#a3a3a3" /></svg>
          </ScrollArrow>
          <ScrollThumb />
          <ScrollArrow>
            <svg width="8" height="4"><path d="M0 0l4 4 4-4z" fill="#505050" /></svg>
          </ScrollArrow>
        </ScrollTrack>
      </Viewport>
      <Taskbar>
        <StartButton><FaWindows size={17} /></StartButton>
        <SearchBox>
          <SearchIcon />
          <SearchText>Type here to search</SearchText>
        </SearchBox>
        <TaskItem $width={50}><TaskViewIcon /></TaskItem>
        <TaskItem $open><ExplorerIcon /></TaskItem>
        <TaskItem><StoreIcon /></TaskItem>
        <TaskItem><MailIcon /></TaskItem>
        <TaskItem><EdgeIcon /></TaskItem>
        <TaskItem><LTile>L</LTile></TaskItem>
        <TaskItem><McAfeeIcon /></TaskItem>
        <TaskItem><OfficeIcon /></TaskItem>
        <TaskItem><MicroscopeIcon /></TaskItem>
        <TaskItem $open $active><ChromeIcon /></TaskItem>
        <TaskItem $open><AtomIcon /></TaskItem>
        <TaskItem $open><TerminalIcon /></TaskItem>
        <Tray>
          <TraySlot $width={24}>
            <svg width="12" height="8"><path d="M0.500 7L6 1.500 11.500 7" fill="none" stroke="#111" strokeWidth="1.300" /></svg>
          </TraySlot>
          <TraySlot $width={24}><BatteryIcon /></TraySlot>
          <TraySlot $width={26}><WifiIcon /></TraySlot>
          <TraySlot $width={22}><SpeakerIcon /></TraySlot>
          <Language>DEU</Language>
          <Clock>
            11:04 PM
            <br />
            8/23/2020
          </Clock>
          <TraySlot $width={30}><NotificationIcon /></TraySlot>
          <ShowDesktop />
        </Tray>
      </Taskbar>
    </Screen>
  );
}
